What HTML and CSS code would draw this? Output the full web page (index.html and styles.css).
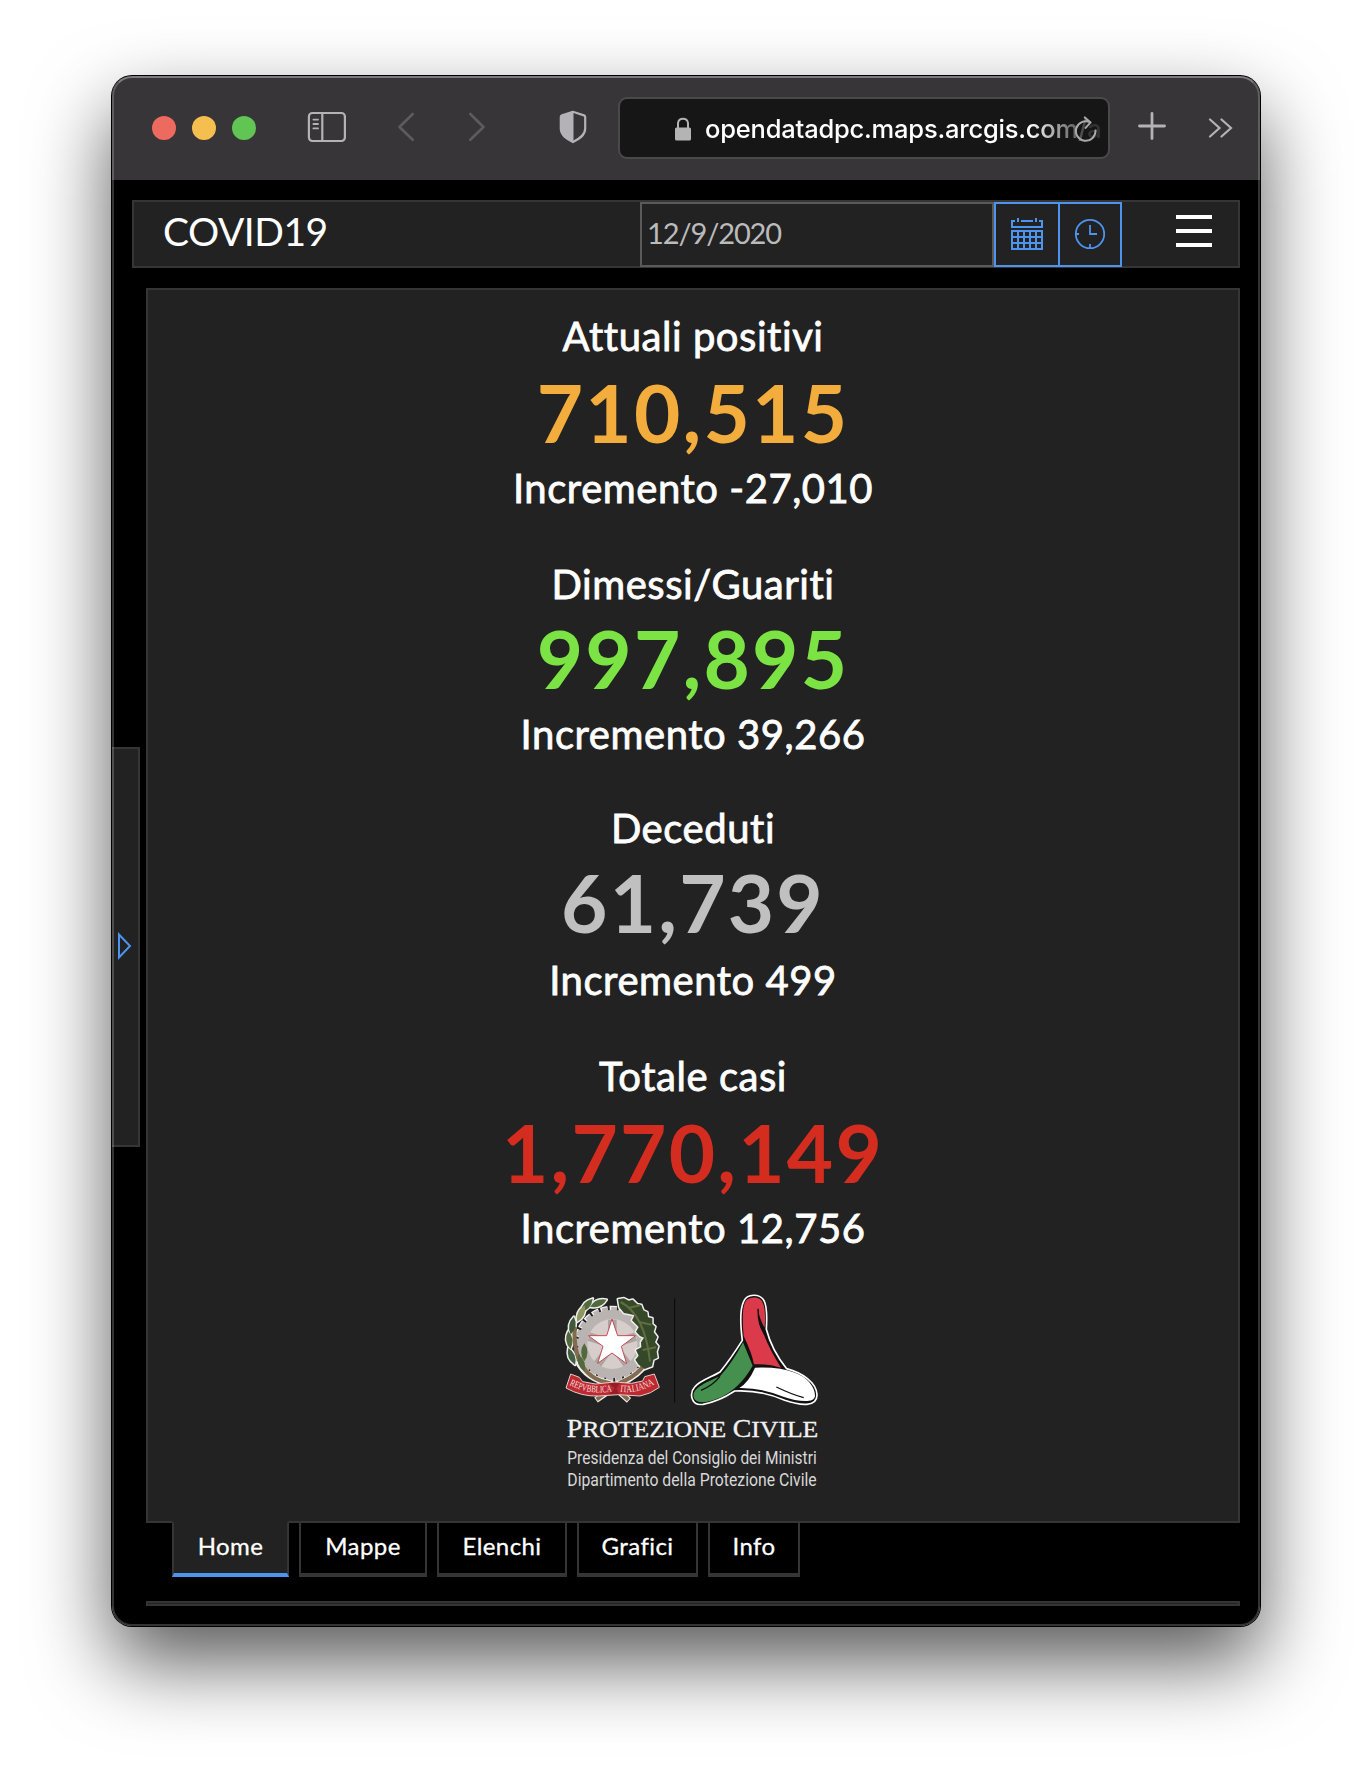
FILE: index.html
```html
<!DOCTYPE html>
<html lang="it">
<head>
<meta charset="utf-8">
<title>COVID19</title>
<link rel="stylesheet" href="styles.css">
</head>
<body>
<div class="window">
  <header class="toolbar">
    <div class="lights"><i class="red"></i><i class="yellow"></i><i class="green"></i></div>
    <svg class="sidebar-icon" width="40" height="32" viewBox="0 0 40 32" fill="none" stroke="#b5b2b7" stroke-width="2.2"><rect x="1.9" y="2" width="36" height="28" rx="3.5"/><path d="M15.3 2v28"/><path stroke-width="1.8" stroke-linecap="round" d="M6.4 8.6h4.6M6.4 13h4.6M6.4 17.4h4.6"/></svg>
    <svg class="back" width="18" height="30" viewBox="0 0 18 30" fill="none" stroke="#5e5b60" stroke-width="2.6" stroke-linecap="round" stroke-linejoin="round"><path d="M15.7 2 2.5 15l13.2 12.8"/></svg>
    <svg class="forward" width="18" height="30" viewBox="0 0 18 30" fill="none" stroke="#5e5b60" stroke-width="2.6" stroke-linecap="round" stroke-linejoin="round"><path d="M2.3 2l13.2 13L2.3 27.8"/></svg>
    <svg class="shield" width="28" height="34" viewBox="0 0 28 34"><path d="M14 1.800 3 5.400Q1.800 5.800 1.800 7v11.500c0 7 6.700 10.700 12.200 13.500 5.500-2.800 12.200-6.500 12.200-13.500V7q0-1.200-1.200-1.600z" fill="none" stroke="#b5b2b7" stroke-width="2.200"/><path d="M14.500 1 2 5.400V19c0 7 7 11 12.500 14z" fill="#b5b2b7"/></svg>
    <div class="address">
      <svg class="lock" width="16" height="24" viewBox="0 0 16 24"><path d="M3 12V6.500C3 0 13 0 13 6.500V12" fill="none" stroke="#b4b4b4" stroke-width="2"/><rect y="10.500" width="16" height="13" rx="1.600" fill="#b4b4b4"/></svg>
      <span class="url">opendatadpc.maps.arcgis.com/a</span>
      <svg class="reload" width="24" height="28" viewBox="0 0 24 28" fill="none" stroke="#aaa" stroke-width="2" stroke-linecap="round" stroke-linejoin="round"><path d="M21.500 15.500A9.800 9.800 0 1 1 16 7.200M10.800 2.400l5.800 5-5 5.500"/></svg>
    </div>
    <svg class="plus" width="28" height="28" viewBox="0 0 28 28" stroke="#b5b2b7" stroke-width="2.800" stroke-linecap="round"><path d="M14 1.500v25M1.500 14h25"/></svg>
    <svg class="more" width="26" height="20" viewBox="0 0 26 20" fill="none" stroke="#b5b2b7" stroke-width="2.200" stroke-linecap="round"><path d="M2 1.500l9.500 8.500L2 18.500M13.500 1.500 23 10l-9.500 8.500"/></svg>
  </header>
  <div class="page">
    <div class="titlebar">
      <h1>COVID19</h1>
      <div class="date"><span>12/9/2020</span></div>
      <div class="btn"><svg width="32" height="32" viewBox="0 0 32 32" fill="none" stroke="#4c94ee" stroke-width="2"><path d="M4 3H1v6h30V3h-3M10 3h12M7 0v4M25 0v4M1 13h30v18H1zM1 19h30M1 25h30M7 13v18M13 13v18M19 13v18M25 13v18"/></svg></div>
      <div class="btn second"><svg width="32" height="32" viewBox="0 0 32 32" fill="none" stroke="#4c94ee" stroke-width="1.800"><circle cx="16" cy="16" r="14.200"/><path d="M16 7v9h7M2 16h3M16 30v-4"/></svg></div>
      <div class="menu"><i></i><i></i><i></i></div>
    </div>
    <main class="panel">
      <section class="stat far"><p class="label">Attuali positivi</p><p class="num orange">710,515</p><p class="inc">Incremento -27,010</p></section>
      <section class="stat"><p class="label">Dimessi/Guariti</p><p class="num green-num">997,895</p><p class="inc">Incremento 39,266</p></section>
      <section class="stat third"><p class="label">Deceduti</p><p class="num gray">61,739</p><p class="inc">Incremento 499</p></section>
      <section class="stat far"><p class="label">Totale casi</p><p class="num red-num">1,770,149</p><p class="inc">Incremento 12,756</p></section>
      <svg class="logo" width="280" height="220" viewBox="0 0 840 660">
        <defs><path id="rib1" d="M58 315Q120 348 194 333"/><path id="rib2" d="M210 335Q265 343 320 308"/>
        <path id="leaf" d="M0-27Q19 0 0 27Q-19 0 0-27z"/>
        <path id="oak" d="M204 58l18-3 14 7 12-3 14 14 12 2 6 16 12 6 2 15 13 3 0 17 9 8-5 16 11 15-7 16 10 12-5 16 3 18-13 6-4 20-22 8-18-13-10-15 10-12-8-17 16-8-1-15 9-14-12-5-12-13 8-14-12-12-8-8 8-15-16-4-16-3-14-17z"/></defs>
        <circle cx="187" cy="192" r="105" fill="none" stroke="#f2f0ef" stroke-width="20" stroke-dasharray="21 6"/>
        <circle cx="187" cy="192" r="103" fill="#b9b3b1"/>
        <circle cx="187" cy="192" r="104" fill="none" stroke="#b9b3b1" stroke-width="14" stroke-dasharray="17 10"/>
        <circle cx="187" cy="192" r="75" fill="#d7cecb"/>
        <path d="M187 192V119M187 192 117 170M187 192 143 252M187 192 231 252M187 192 257 170" stroke="#aaa5a3" stroke-width="26"/>
        <path d="M186 117 203 167H257L214 199 230 251 186 219 143 250 159 199 115 167H170z" fill="#fff" stroke="#c84b55" stroke-width="3"/>
        <g stroke="#eee" stroke-width="9" stroke-linejoin="round" fill="#eee">
          <use href="#leaf" transform="translate(145 70) rotate(67)"/><use href="#leaf" transform="translate(110 76) rotate(42)"/><use href="#leaf" transform="translate(93 101) rotate(25)"/><use href="#leaf" transform="translate(67 137) rotate(10)"/><use href="#leaf" transform="translate(58 180) rotate(-7)"/><use href="#leaf" transform="translate(65 229) rotate(-22)"/>
          <use href="#oak"/>
        </g>
        <g fill="none" stroke="#eee" stroke-width="19"><path d="M82 242Q110 298 180 310L237 361M294 242Q267 288 210 310L138 360"/></g>
        <g fill="none" stroke="#826b4e" stroke-width="12"><path d="M74 140Q66 290 180 310L235 359M302 210Q287 278 210 308L140 358"/></g>
        <g fill="#52683d">
          <use href="#leaf" transform="translate(145 70) rotate(67)"/><use href="#leaf" transform="translate(110 76) rotate(42)"/><use href="#leaf" transform="translate(93 101) rotate(25)" fill="#8e965d"/><use href="#leaf" transform="translate(67 137) rotate(10)" fill="#3f5939"/><use href="#leaf" transform="translate(58 180) rotate(-7)"/><use href="#leaf" transform="translate(65 229) rotate(-22)" fill="#425f42"/><use href="#leaf" transform="translate(103 217)"/><use href="#leaf" transform="translate(94 249) rotate(-20)"/>
        </g>
        <use href="#oak" fill="#36482a"/>
        <path d="M212 66Q285 105 300 245M268 126l36 8M278 210l40-8M235 84l35-8" fill="none" stroke="#5f6e40" stroke-width="6"/>
        <path d="M62 282L88 292 98 305 137 312 193 306 245 310 278 303 284 290 313 282 328 322Q302 342 270 348L206 344 145 348Q94 350 48 324z" fill="#bd2930" stroke="#e7cccc" stroke-width="3" stroke-linejoin="round"/>
        <path d="M176 310l18 15-16 17 29 0-8-17 12-17z" fill="#961e25"/>
        <g class="ribbon"><text><textPath href="#rib1" textLength="132" lengthAdjust="spacingAndGlyphs">REPVBBLICA</textPath></text><text><textPath href="#rib2" textLength="108" lengthAdjust="spacingAndGlyphs">ITALIANA</textPath></text></g>
        <path d="M374 55v312" stroke="#080808" stroke-width="3"/>
        <path d="M577 181Q566 95 581 64C591 40 630 40 642 62Q653 82 649 148Q666 213 710 266C757 279 799 307 801 344C802 383 751 377 704 361Q633 329 554 333Q507 364 459 373C423 378 417 340 434 321C450 301 490 289 510 276Q543 235 577 181z" fill="#111" stroke="#fff" stroke-width="5"/>
        <path d="M581 168Q573 79 589 61C603 47 633 51 638 68Q648 88 644 143Q629 119 624 86Q621 126 642 165Q660 211 693 263Q650 251 612 253Q606 220 581 168z" fill="#da3a49"/>
        <path d="M579 187 608 257Q569 327 505 355Q449 377 434 358C421 333 447 315 510 289Q550 245 579 187z" fill="#46904f"/>
        <path d="M615 263Q689 260 735 278C768 289 796 319 795 348C793 371 743 365 700 350Q634 323 568 324Q596 307 615 263z" fill="#fff"/>
        <path d="M624 86Q624 137 644 161M453 331Q490 315 510 289M679 321Q727 344 761 353" fill="none" stroke="#111" stroke-width="4"/>
        <text class="pc" x="50" y="471" textLength="755" lengthAdjust="spacingAndGlyphs"><tspan class="cap">P</tspan>ROTEZIONE <tspan class="cap">C</tspan>IVILE</text>
        <text class="sub" x="52" y="553" textLength="748" lengthAdjust="spacingAndGlyphs">Presidenza del Consiglio dei Ministri</text>
        <text class="sub" x="52" y="619" textLength="748" lengthAdjust="spacingAndGlyphs">Dipartimento della Protezione Civile</text>
      </svg>
    </main>
    <nav class="tabs"><a class="active">Home</a><a class="t2">Mappe</a><a class="t3">Elenchi</a><a class="t4">Grafici</a><a class="t5">Info</a></nav>
    <div class="strip"></div>
    <div class="handle"><svg width="16" height="30" viewBox="0 0 16 30" fill="none" stroke="#4c94ee" stroke-width="2"><path d="M3 3.500v23L14 15z"/></svg></div>
  </div>
</div>
</body>
</html>
```
FILE: styles.css
```css
* { box-sizing: border-box; }
body { margin: 0; padding: 76px 112px 0; height: 1774px; overflow: hidden; background: #fff; font-family: Lato, sans-serif; font-variant-ligatures: none; color: #fff; }
h1, p { margin: 0; font-weight: 400; }
svg { display: block; flex: none; }
.window { position: relative; width: 1148px; height: 1550px; border-radius: 20px; overflow: hidden; background: #000; }
body::before { content: ""; position: absolute; left: 112px; top: 76px; width: 1148px; height: 1550px; border-radius: 20px; box-shadow: 0 0 0 1px #000, 0 36px 80px rgba(0,0,0,.66); }
.window::after { content: ""; position: absolute; inset: 0; border-radius: 20px; border: 2px solid rgba(255,255,255,.2); border-top-color: rgba(255,255,255,.35); pointer-events: none; }
.toolbar { display: flex; height: 104px; padding-left: 40px; background: #383539; }
.lights { display: flex; gap: 16px; padding-top: 40px; }
.lights i { width: 24px; height: 24px; border-radius: 50%; }
.red { background: #ed6a5e; }
.yellow { background: #f5bf4f; }
.green { background: #61c554; }
.sidebar-icon { margin: 35px 0 0 55px; }
.lights + .sidebar-icon { margin-left: 51px; }
.back { margin: 36px 0 0 50px; }
.forward { margin: 36px 0 0 53px; }
.shield { margin: 34px 0 0 73px; }
.address { position: relative; display: flex; width: 492px; height: 62px; margin: 21px 0 0 31px; padding-left: 55px; border: 2px solid #49494a; border-radius: 9px; background: #161616; }
.lock { margin-top: 18px; }
.url { width: 400px; margin: 13px 0 0 14px; white-space: nowrap; font: 500 25.5px/34px Inter, sans-serif; letter-spacing: -.2px; -webkit-mask-image: linear-gradient(90deg,#000 325px,rgba(0,0,0,.12) 385px); mask-image: linear-gradient(90deg,#000 325px,rgba(0,0,0,.12) 385px); }
.reload { position: absolute; left: 454px; top: 16px; }
.plus { margin: 36px 0 0 28px; }
.more { margin: 42px 0 0 42px; }
.page { position: relative; padding: 20px 20px 0; }
.titlebar { display: flex; height: 68px; border: 2px solid #353535; background: #222; }
.titlebar h1 { width: 506px; padding-left: 29px; font-size: 39px; line-height: 59px; letter-spacing: -.5px; }
.date { width: 354px; height: 65px; padding-left: 5px; border: 2px solid #5a5a5a; color: #bbb; font-size: 29px; line-height: 57px; letter-spacing: -1.1px; }
.btn { display: grid; place-items: center; width: 66px; height: 65px; padding-bottom: 2px; border: 2px solid #4c94ee; }
.btn.second { width: 64px; margin-left: -2px; }
.menu { display: flex; flex-direction: column; gap: 10px; margin: 13px 0 0 54px; }
.menu i { width: 36px; height: 4px; background: #fff; }
.panel { display: flex; flex-direction: column; align-items: center; height: 1235px; margin: 20px 0 0 14px; padding-top: 21px; border: 2px solid #353535; background: #222; }
.stat { display: flex; flex-direction: column; align-items: center; height: 244px; white-space: nowrap; }
.stat.far, .stat.third { height: 248px; }
.label, .inc { font-size: 40px; line-height: 50px; letter-spacing: .55px; -webkit-text-stroke: .8px #fff; }
.num { margin-top: 1px; font-size: 80px; line-height: 96px; font-weight: 700; letter-spacing: 2.2px; }
.far .num { margin-top: 3px; }
.inc { margin-top: 3px; }
.third .inc { margin-top: 5px; }
.orange { color: #f3ad3d; }
.green-num { color: #7be344; }
.gray { color: #c0c0c0; }
.red-num { color: #d42d1f; }
.logo { margin: -19px 0 0 -6px; }
.ribbon { font: 30px "Liberation Serif", serif; fill: #f6dede; }
.pc { font: 72px "Liberation Serif", serif; fill: #f1f1f1; stroke: #f1f1f1; stroke-width: 1; }
.pc .cap { font-size: 78px; }
.sub { font: 56px Roboto, sans-serif; fill: #d8d8d8; }
.tabs { position: relative; display: flex; gap: 10px; margin: -2px 0 0 40px; }
.tabs a { display: block; width: 128px; height: 56px; border: 2px solid #353535; border-bottom-width: 4px; font-size: 24px; line-height: 45px; letter-spacing: .4px; text-align: center; -webkit-text-stroke: .3px #fff; }
.tabs .active { width: 117px; background: #222; border-top-color: #222; border-bottom-color: #4c94ee; }
.tabs .t3 { width: 130px; }
.tabs .t4 { width: 121px; }
.tabs .t5 { width: 92px; }
.strip { height: 5px; margin: 24px 0 0 14px; border: 2px solid #353535; background: #222; }
.handle { position: absolute; left: 0; top: 567px; display: flex; align-items: center; width: 28px; height: 400px; padding: 0 0 2px 4px; border: 2px solid #353535; border-left: 0; background: #222; }
```
